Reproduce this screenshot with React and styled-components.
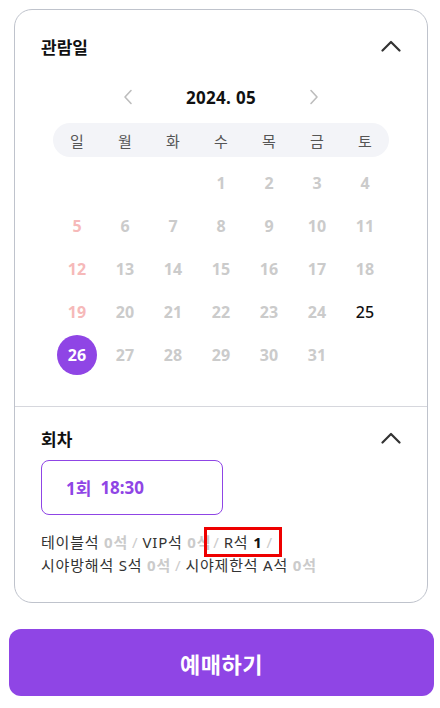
import React from 'react';
import styled, { createGlobalStyle } from 'styled-components';

const GlobalStyle = createGlobalStyle`
  body {
    margin: 0;
    background: #fff;
    font-family: "Noto Sans", "Noto Sans CJK KR", sans-serif;
    color: #111;
  }
`

const Page = styled.div`
  width: 440px;
  padding-top: 9px;
  box-sizing: border-box;
`

const Card = styled.div`
  margin: 0 12px 0 14px;
  border: 1px solid #bfc3cc;
  border-radius: 18px;
`

const Section = styled.div`
  padding: ${p => p.$pad};
  border-top: ${p => (p.$divided ? '1px solid #d6d7dd' : 'none')};
`

const HeaderRow = styled.div`
  display: flex;
  justify-content: space-between;
  align-items: center;
  height: 24px;
`

const Title = styled.h3`
  margin: 0;
  font-size: 17px;
  font-weight: 700;
  color: #111;
`

const IconButton = styled.button`
  border: none;
  background: none;
  padding: 0;
  display: flex;
  align-items: center;
  justify-content: center;
  cursor: pointer;
`

const MonthNav = styled.div`
  display: flex;
  justify-content: center;
  align-items: center;
  gap: 38px;
  margin-top: 27px;
  height: 24px;
`

const MonthLabel = styled.span`
  font-size: 17px;
  font-weight: 700;
  color: #111;
  width: 100px;
  text-align: center;
  letter-spacing: 0.3px;
`

const Weekdays = styled.div`
  display: grid;
  grid-template-columns: repeat(7, 1fr);
  width: 336px;
  height: 34px;
  margin: 14px auto 0;
  background: #f3f4f8;
  border-radius: 17px;
  align-items: center;
`

const Weekday = styled.span`
  text-align: center;
  font-size: 15px;
  color: #555;
`

const Days = styled.div`
  display: grid;
  grid-template-columns: repeat(7, 1fr);
  grid-auto-rows: 41px;
  row-gap: 2px;
  width: 336px;
  margin: 5px auto 0;
`

const dayColor = {
  past: '#cbcbcb',
  sunday: '#f6b9b9',
  open: '#111',
  selected: '#fff',
}

const Day = styled.span`
  justify-self: center;
  align-self: center;
  width: 40px;
  height: 40px;
  border-radius: 50%;
  display: flex;
  align-items: center;
  justify-content: center;
  font-size: 16px;
  font-weight: ${p => (p.$kind === 'open' ? 500 : 700)};
  color: ${p => dayColor[p.$kind]};
  background: ${p => (p.$kind === 'selected' ? '#8f45e5' : 'transparent')};
`

const SessionButton = styled.button`
  margin-top: 10px;
  width: 182px;
  height: 55px;
  border: 1px solid #8f45e5;
  border-radius: 8px;
  background: #fff;
  display: flex;
  align-items: center;
  gap: 9px;
  padding: 0 0 0 24px;
  font-family: inherit;
  font-size: 17px;
  font-weight: 700;
  color: #8f45e5;
`

const SeatInfo = styled.p`
  margin: 16px 0 0;
  font-size: 15px;
  line-height: 23px;
  color: #333;
  letter-spacing: 0.8px;
`

const Count = styled.b`
  color: #cbcbcb;
  font-weight: 700;
`

const Sep = styled.span`
  color: #cbcbcb;
  margin: 0 4px;
`

const Highlight = styled.span`
  outline: 3px solid #ee0000;
  outline-offset: 2px;
  padding: 0;
  margin-left: -2px;
`

const Strong = styled.b`
  color: #111;
  font-weight: 700;
`

const BookButton = styled.button`
  display: block;
  margin: 26px 6px 0 9px;
  width: 425px;
  height: 67px;
  border: none;
  border-radius: 12px;
  background: #8f45e5;
  color: #fff;
  font-family: inherit;
  font-size: 22px;
  font-weight: 700;
  letter-spacing: 0.5px;
`

const ChevronUp = () => (
  <svg width="20" height="12" viewBox="0 0 20 12" fill="none">
    <path d="M1.5 10.5L10 2l8.5 8.5" stroke="#333" strokeWidth="2.2" strokeLinecap="round" strokeLinejoin="round" />
  </svg>
)

const Chevron = ({ dir }) => (
  <svg width="10" height="16" viewBox="0 0 10 16" fill="none">
    <path
      d={dir === 'left' ? 'M8 1.5L2 8l6 6.5' : 'M2 1.5L8 8l-6 6.5'}
      stroke="#bdbdbd"
      strokeWidth="1.6"
      strokeLinecap="round"
      strokeLinejoin="round"
    />
  </svg>
)

const weekdays = ['일', '월', '화', '수', '목', '금', '토']

function buildDays() {
  const cells = [null, null, null]
  for (let d = 1; d <= 31; d++) {
    const col = (d + 2) % 7
    let kind = 'past'
    if (d === 26) kind = 'selected'
    else if (d === 25) kind = 'open'
    else if (col === 0) kind = 'sunday'
    cells.push({ d, kind })
  }
  return cells
}

export default function App() {
  const days = buildDays()
  return (
    <Page>
      <GlobalStyle />
      <Card>
        <Section $pad="24px 26px 31px">
          <HeaderRow>
            <Title>관람일</Title>
            <IconButton><ChevronUp /></IconButton>
          </HeaderRow>
          <MonthNav>
            <IconButton><Chevron dir="left" /></IconButton>
            <MonthLabel>2024. 05</MonthLabel>
            <IconButton><Chevron dir="right" /></IconButton>
          </MonthNav>
          <Weekdays>
            {weekdays.map(w => <Weekday key={w}>{w}</Weekday>)}
          </Weekdays>
          <Days>
            {days.map((c, i) =>
              c ? <Day key={i} $kind={c.kind}>{c.d}</Day> : <span key={i} />
            )}
          </Days>
        </Section>
        <Section $divided $pad="19px 26px 25px">
          <HeaderRow>
            <Title>회차</Title>
            <IconButton><ChevronUp /></IconButton>
          </HeaderRow>
          <SessionButton>
            <span>1회</span>
            <span>18:30</span>
          </SessionButton>
          <SeatInfo>
            테이블석 <Count>0석</Count><Sep>/</Sep>VIP석 <Count>0석</Count>
            <Highlight><Sep>/</Sep>R석 <Strong>1</Strong><Sep>/</Sep></Highlight>
            <br />
            시야방해석 S석 <Count>0석</Count><Sep>/</Sep>시야제한석 A석 <Count>0석</Count>
          </SeatInfo>
        </Section>
      </Card>
      <BookButton>예매하기</BookButton>
    </Page>
  )
}
